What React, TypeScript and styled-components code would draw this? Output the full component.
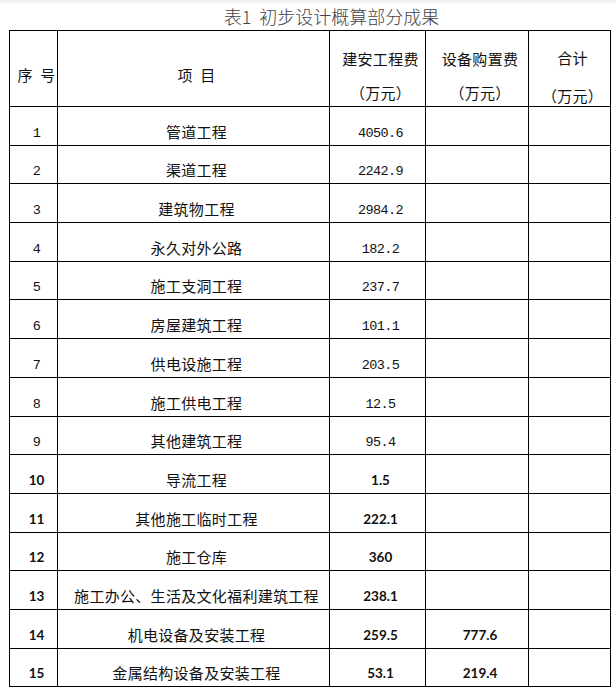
import React from "react";
import styled, { createGlobalStyle } from "styled-components";

const GlobalStyle = createGlobalStyle`
  html, body {
    margin: 0;
    padding: 0;
    background: #fff;
  }
  body {
    font-family: "Noto Sans CJK SC", "Noto Sans", sans-serif;
    color: #000;
  }
`;

type Row = {
  no: string;
  name: string;
  build: string;
  equip?: string;
  bold?: boolean;
};

const rows: Row[] = [
  { no: "1", name: "管道工程", build: "4050.6" },
  { no: "2", name: "渠道工程", build: "2242.9" },
  { no: "3", name: "建筑物工程", build: "2984.2" },
  { no: "4", name: "永久对外公路", build: "182.2" },
  { no: "5", name: "施工支洞工程", build: "237.7" },
  { no: "6", name: "房屋建筑工程", build: "101.1" },
  { no: "7", name: "供电设施工程", build: "203.5" },
  { no: "8", name: "施工供电工程", build: "12.5" },
  { no: "9", name: "其他建筑工程", build: "95.4" },
  { no: "10", name: "导流工程", build: "1.5", bold: true },
  { no: "11", name: "其他施工临时工程", build: "222.1", bold: true },
  { no: "12", name: "施工仓库", build: "360", bold: true },
  { no: "13", name: "施工办公、生活及文化福利建筑工程", build: "238.1", bold: true },
  { no: "14", name: "机电设备及安装工程", build: "259.5", equip: "777.6", bold: true },
  { no: "15", name: "金属结构设备及安装工程", build: "53.1", equip: "219.4", bold: true },
];

const colWidths = [48, 272, 96, 103, 82];

export default function App() {
  return (
    <Page>
      <GlobalStyle />
      <Caption>表1&nbsp;&nbsp;初步设计概算部分成果</Caption>
      <Table>
        <colgroup>
          {colWidths.map((w, i) => (
            <Col key={i} $w={w} />
          ))}
        </colgroup>
        <thead>
          <HeadRow>
            <HeadCell $single>序&nbsp;&nbsp;号</HeadCell>
            <HeadCell $single>项&nbsp;&nbsp;目</HeadCell>
            <HeadCell $top={18}>
              <Lines $gap={14}>
                <span>建安工程费</span>
                <span>（万元）</span>
              </Lines>
            </HeadCell>
            <HeadCell $top={18}>
              <Lines $gap={14}>
                <span>设备购置费</span>
                <span>（万元）</span>
              </Lines>
            </HeadCell>
            <HeadCell $top={17}>
              <Lines $gap={18}>
                <span>合计</span>
                <span>（万元）</span>
              </Lines>
            </HeadCell>
          </HeadRow>
        </thead>
        <tbody>
          {rows.map((r) => (
            <BodyRow key={r.no}>
              <NumCell $bold={r.bold}>{r.no}</NumCell>
              <NameCell>{r.name}</NameCell>
              <NumCell $bold={r.bold}>{r.build}</NumCell>
              <NumCell $bold={r.bold}>{r.equip ?? ""}</NumCell>
              <NumCell $bold={r.bold} />
            </BodyRow>
          ))}
        </tbody>
      </Table>
    </Page>
  );
}

const Page = styled.div`
  width: 616px;
  height: 689px;
  overflow: hidden;
  background: linear-gradient(#ececec 0, #f8f8f8 3px, #fff 5px);
`;

const Caption = styled.div`
  height: 30px;
  padding-left: 47px;
  box-sizing: border-box;
  text-align: center;
  font-size: 18px;
  font-weight: 300;
  line-height: 32px;
  color: #444;
  white-space: nowrap;
`;

const Table = styled.table`
  margin-left: 9px;
  width: 601px;
  table-layout: fixed;
  border-collapse: collapse;
`;

const Col = styled.col<{ $w: number }>`
  width: ${(p) => p.$w}px;
`;

const HeadRow = styled.tr`
  height: 76px;
`;

const BodyRow = styled.tr`
  height: 38.7px;
`;

const Cell = styled.td`
  border: 1px solid #000;
  padding: 0 0 0 6px;
  text-align: center;
  white-space: nowrap;
  overflow: hidden;
`;

const HeadCell = styled(Cell).attrs({ as: "th" })<{
  $single?: boolean;
  $top?: number;
}>`
  font-weight: 400;
  font-size: 15px;
  letter-spacing: 0.3px;
  vertical-align: ${(p) => (p.$single ? "middle" : "top")};
  padding-top: ${(p) => (p.$single ? 12 : p.$top ?? 0)}px;
  line-height: 20px;
  color: #111;
`;

const Lines = styled.div<{ $gap: number }>`
  display: flex;
  flex-direction: column;
  align-items: center;
  gap: ${(p) => p.$gap}px;
`;

const NameCell = styled(Cell)`
  font-size: 15px;
  letter-spacing: 0.3px;
  line-height: 18px;
  vertical-align: bottom;
  padding-bottom: 4px;
  color: #111;
`;

const NumCell = styled(Cell)<{ $bold?: boolean }>`
  font-family: ${(p) =>
    p.$bold ? "Lato, 'Open Sans', sans-serif" : "'Liberation Mono', monospace"};
  font-weight: ${(p) => (p.$bold ? 700 : 400)};
  font-size: ${(p) => (p.$bold ? 13.5 : 13.5)}px;
  letter-spacing: ${(p) => (p.$bold ? 0 : -0.6)}px;
  line-height: 18px;
  vertical-align: bottom;
  padding-bottom: ${(p) => (p.$bold ? 4 : 2)}px;
  color: #111;
`;
